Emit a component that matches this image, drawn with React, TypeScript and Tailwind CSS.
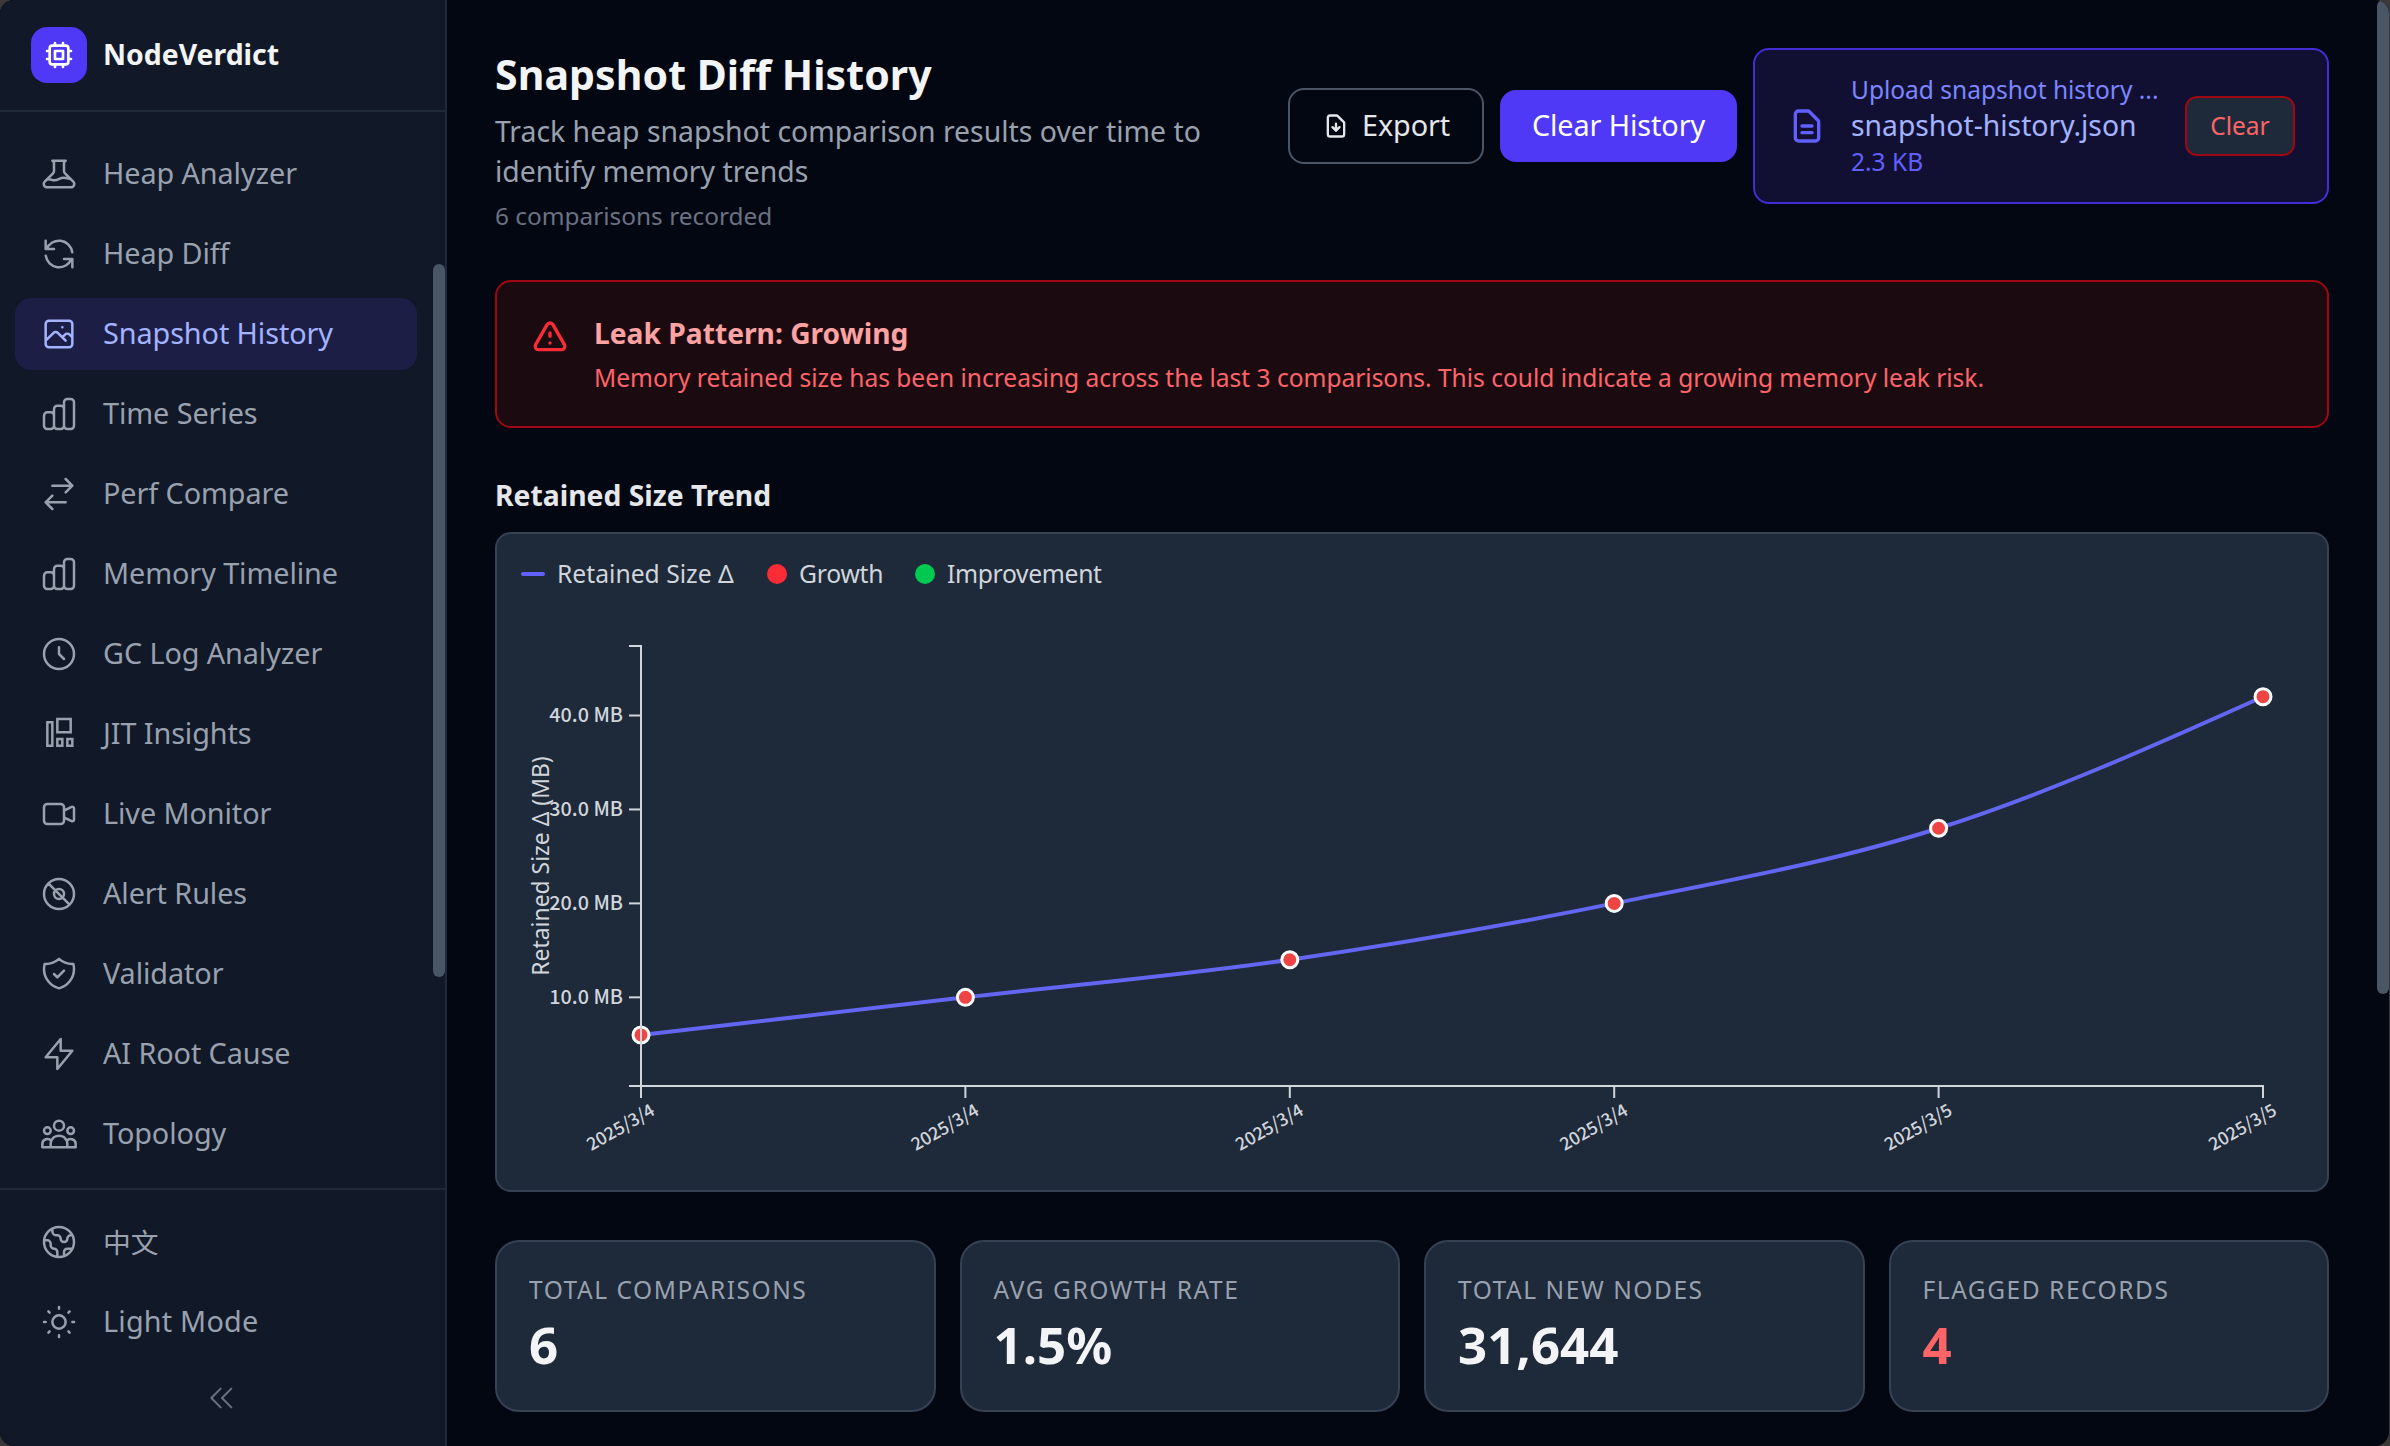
import clsx from "clsx"

interface IconProps {
    d: string
    className?: string
    strokeWidth?: number
}

const Icon = ({ d, className, strokeWidth = 1.5 }: IconProps) => (
    <svg
        viewBox="0 0 24 24"
        fill="none"
        stroke="currentColor"
        strokeWidth={strokeWidth}
        className={clsx("shrink-0", className)}
    >
        <path strokeLinecap="round" strokeLinejoin="round" d={d} />
    </svg>
)

const icons = {
    chip: "M9 3v2m6-2v2M9 19v2m6-2v2M5 9H3m2 6H3m18-6h-2m2 6h-2M7 19h10a2 2 0 002-2V7a2 2 0 00-2-2H7a2 2 0 00-2 2v10a2 2 0 002 2zM9 9h6v6H9V9z",
    beaker: "M19.428 15.428a2 2 0 00-1.022-.547l-2.387-.477a6 6 0 00-3.86.517l-.318.158a6 6 0 01-3.86.517L6.05 15.21a2 2 0 00-1.806.547M8 4h8l-1 1v5.172a2 2 0 00.586 1.414l5 5c1.26 1.26.367 3.414-1.415 3.414H4.828c-1.782 0-2.674-2.154-1.414-3.414l5-5A2 2 0 009 10.172V5L8 4z",
    refresh: "M4 4v5h.582m15.356 2A8.001 8.001 0 004.582 9m0 0H9m11 11v-5h-.581m0 0a8.003 8.003 0 01-15.357-2m15.357 2H15",
    photo: "M4 16l4.586-4.586a2 2 0 012.828 0L16 16m-2-2l1.586-1.586a2 2 0 012.828 0L20 14m-6-6h.01M6 20h12a2 2 0 002-2V6a2 2 0 00-2-2H6a2 2 0 00-2 2v12a2 2 0 002 2z",
    chart: "M9 19v-6a2 2 0 00-2-2H5a2 2 0 00-2 2v6a2 2 0 002 2h2a2 2 0 002-2zm0 0V9a2 2 0 012-2h2a2 2 0 012 2v10m-6 0a2 2 0 002 2h2a2 2 0 002-2m0 0V5a2 2 0 012-2h2a2 2 0 012 2v14a2 2 0 01-2 2h-2a2 2 0 01-2-2z",
    swap: "M8 7h12m0 0l-4-4m4 4l-4 4m0 6H4m0 0l4 4m-4-4l4-4",
    clock: "M12 8v4l3 3m6-3a9 9 0 11-18 0 9 9 0 0118 0z",
    video: "M15 10l4.553-2.276A1 1 0 0121 8.618v6.764a1 1 0 01-1.447.894L15 14M5 18h8a2 2 0 002-2V8a2 2 0 00-2-2H5a2 2 0 00-2 2v8a2 2 0 002 2z",
    alert: "M18.364 18.364A9 9 0 005.636 5.636m12.728 12.728A9 9 0 015.636 5.636m12.728 12.728L5.636 5.636M15 12a3 3 0 11-6 0 3 3 0 016 0z",
    shield: "M9 12l2 2 4-4m5.618-4.016A11.955 11.955 0 0112 2.944a11.955 11.955 0 01-8.618 3.04A12.02 12.02 0 003 9c0 5.591 3.824 10.29 9 11.622 5.176-1.332 9-6.03 9-11.622 0-1.042-.133-2.052-.382-3.016z",
    bolt: "M13 10V3L4 14h7v7l9-11h-7z",
    group: "M17 20h5v-2a3 3 0 00-5.356-1.857M17 20H7m10 0v-2c0-.656-.126-1.283-.356-1.857M7 20H2v-2a3 3 0 015.356-1.857M7 20v-2c0-.656.126-1.283.356-1.857m0 0a5.002 5.002 0 019.288 0M15 7a3 3 0 11-6 0 3 3 0 016 0zm6 3a2 2 0 11-4 0 2 2 0 014 0zM7 10a2 2 0 11-4 0 2 2 0 014 0z",
    globe: "M3.055 11H5a2 2 0 012 2v1a2 2 0 002 2 2 2 0 012 2v2.945M8 3.935V5.5A2.5 2.5 0 0010.5 8h.5a2 2 0 012 2 2 2 0 104 0 2 2 0 012-2h1.064M15 20.488V18a2 2 0 012-2h3.064M21 12a9 9 0 11-18 0 9 9 0 0118 0z",
    sun: "M12 3v1m0 16v1m9-9h-1M4 12H3m15.364 6.364l-.707-.707M6.343 6.343l-.707-.707m12.728 0l-.707.707M6.343 17.657l-.707.707M16 12a4 4 0 11-8 0 4 4 0 018 0z",
    collapse: "M11 19l-7-7 7-7m8 14l-7-7 7-7",
    download: "M12 10v6m0 0l-3-3m3 3l3-3m2 8H7a2 2 0 01-2-2V5a2 2 0 012-2h5.586a1 1 0 01.707.293l5.414 5.414a1 1 0 01.293.707V19a2 2 0 01-2 2z",
    document: "M9 12h6m-6 4h6m2 5H7a2 2 0 01-2-2V5a2 2 0 012-2h5.586a1 1 0 01.707.293l5.414 5.414a1 1 0 01.293.707V19a2 2 0 01-2 2z",
    warning: "M12 9v2m0 4h.01m-6.938 4h13.856c1.54 0 2.502-1.667 1.732-3L13.732 4c-.77-1.333-2.694-1.333-3.464 0L3.34 16c-.77 1.333.192 3 1.732 3z",
}

// plain blocks, drawn with square corners
const BlocksIcon = () => (
    <svg viewBox="0 0 24 24" fill="none" stroke="currentColor" strokeWidth={1.5} className="size-10 shrink-0">
        <path d="M5 5h3v14H5zM11 3h8v8h-8zM11 15h3v4h-3zM17 15h3v4h-3z" />
    </svg>
)

const navItems = [
    { label: "Heap Analyzer", icon: icons.beaker },
    { label: "Heap Diff", icon: icons.refresh },
    { label: "Snapshot History", icon: icons.photo, active: true },
    { label: "Time Series", icon: icons.chart },
    { label: "Perf Compare", icon: icons.swap },
    { label: "Memory Timeline", icon: icons.chart },
    { label: "GC Log Analyzer", icon: icons.clock },
    { label: "JIT Insights", icon: null },
    { label: "Live Monitor", icon: icons.video },
    { label: "Alert Rules", icon: icons.alert },
    { label: "Validator", icon: icons.shield },
    { label: "AI Root Cause", icon: icons.bolt },
    { label: "Topology", icon: icons.group },
]

const Sidebar = () => (
    <aside className="w-[447px] shrink-0 h-full flex flex-col bg-[#111827] border-r-2 border-gray-800">
        <div className="h-28 shrink-0 flex items-center gap-4 pl-[31px] border-b-2 border-gray-800">
            <div className="size-14 rounded-2xl bg-indigo-600 flex items-center justify-center text-white">
                <Icon d={icons.chip} strokeWidth={2} className="size-8" />
            </div>
            <span className="text-[28.4px] leading-10 font-bold text-gray-100 pb-0.5">NodeVerdict</span>
        </div>

        <div className="flex-1 min-h-0 flex justify-between">
            <nav className="w-[402px] ml-[15px] pt-[26px] flex flex-col gap-2">
                {navItems.map((item) => (
                    <a
                        key={item.label}
                        className={clsx(
                            "h-18 shrink-0 flex items-center gap-6 px-6 rounded-2xl text-[28.8px] leading-10 tracking-[-0.003em]",
                            item.active ? "bg-[#1c1e45] text-indigo-300" : "text-gray-400"
                        )}
                    >
                        {item.icon ? <Icon d={item.icon} className="size-10" /> : <BlocksIcon />}
                        <span className="pb-0.5">{item.label}</span>
                    </a>
                ))}
            </nav>
            <div className="w-3 h-[713px] mt-[152px] rounded-full bg-gray-600" />
        </div>

        <div className="h-[258px] shrink-0 border-t-2 border-gray-800 pt-4 pl-[15px] flex flex-col gap-2 text-gray-400 text-[28.8px] leading-10">
            <button className="h-18 flex items-center gap-6 px-6">
                <Icon d={icons.globe} className="size-10" />
                <span className="text-[27.8px]">中文</span>
            </button>
            <button className="h-18 flex items-center gap-6 px-6">
                <Icon d={icons.sun} className="size-10" />
                <span className="pb-0.5 tracking-[0.007em]">Light Mode</span>
            </button>
            <button className="h-16 w-[414px] flex items-center justify-center text-gray-500">
                <Icon d={icons.collapse} className="size-8" />
            </button>
        </div>
    </aside>
)

const PageHeader = () => (
    <header className="flex items-start justify-between h-46">
        <div className="flex-1">
            <h1 className="h-14 text-[41px] leading-[53px] font-bold text-gray-100 tracking-[0.002em]">Snapshot Diff History</h1>
            <p className="mt-[7px] text-[28.4px] leading-10 text-gray-400">
                Track heap snapshot comparison results over time to<br />identify memory trends
            </p>
            <p className="mt-[9px] text-[24.4px] leading-8 text-gray-500">6 comparisons recorded</p>
        </div>

        <div className="flex items-center gap-4 text-[28.8px] leading-10">
            <button className="w-49 h-19 flex items-center gap-3 pl-8 rounded-2xl border-2 border-gray-600 text-gray-200">
                <Icon d={icons.download} strokeWidth={2} className="size-7" />
                <span className="pb-0.5 tracking-[-0.003em]">Export</span>
            </button>
            <button className="w-[237px] h-18 pb-0.5 rounded-2xl bg-indigo-600 text-white tracking-[-0.003em]">Clear History</button>
            <div className="w-[576px] h-39 flex items-center px-8 rounded-2xl border-2 border-indigo-700 bg-[#111032]">
                <Icon d={icons.document} strokeWidth={2} className="size-10 text-indigo-500" />
                <div className="flex-1 min-w-0 mx-6">
                    <p className="text-[24.5px] leading-8 text-indigo-400">Upload snapshot history ...</p>
                    <p className="h-10 text-[28.3px] leading-[38px] text-indigo-300">snapshot-history.json</p>
                    <p className="text-[24.5px] leading-8 text-indigo-500">2.3 KB</p>
                </div>
                <button className="w-[110px] h-15 shrink-0 rounded-xl border-2 border-red-800 bg-gray-800 text-[24.5px] leading-8 text-red-400">
                    Clear
                </button>
            </div>
        </div>
    </header>
)

const LeakAlert = () => (
    <section className="mt-12 h-37 flex items-start gap-6 py-8 px-[33px] rounded-2xl border-2 border-red-800 bg-[#1c0a11]">
        <Icon d={icons.warning} strokeWidth={2} className="size-10 mt-1 text-red-500" />
        <div>
            <h3 className="h-10 text-[28.2px] leading-[38px] font-bold text-red-300">Leak Pattern: Growing</h3>
            <p className="mt-2 text-[24.5px] leading-8 text-red-400">
                Memory retained size has been increasing across the last 3 comparisons. This could indicate a growing memory leak risk.
            </p>
        </div>
    </section>
)

const records = [
    { date: "2025/3/4", mb: 6 },
    { date: "2025/3/4", mb: 10 },
    { date: "2025/3/4", mb: 14 },
    { date: "2025/3/4", mb: 20 },
    { date: "2025/3/5", mb: 28 },
    { date: "2025/3/5", mb: 42 },
]

const margin = { top: 40, right: 40, bottom: 80, left: 120 }
const chart = { width: 1782, height: 560 }
const bottom = chart.height - margin.bottom
const right = chart.width - margin.right

const x = (i: number) => margin.left + (i * (right - margin.left)) / (records.length - 1)
const y = (mb: number) => 485.3 - mb * 9.395

// cubic segments with monotone tangents
const linePath = (points: [number, number][]) => {
    const slopes = points.slice(1).map((p, i) => (p[1] - points[i][1]) / (p[0] - points[i][0]))
    const tangents = points.map((_, i) => {
        if (i === 0 || i === points.length - 1) return 0
        const a = slopes[i - 1]
        const b = slopes[i]
        return a * b <= 0 ? 0 : Math.sign(a) * Math.min(Math.abs(a), Math.abs(b), Math.abs(a + b) / 4) * 2
    })
    tangents[0] = (3 * slopes[0] - tangents[1]) / 2
    const last = points.length - 1
    tangents[last] = (3 * slopes[last - 1] - tangents[last - 1]) / 2

    return points.reduce((d, [px, py], i) => {
        if (i === 0) return `M${px},${py}`
        const [qx, qy] = points[i - 1]
        const dx = (px - qx) / 3
        return `${d}C${qx + dx},${qy + dx * tangents[i - 1]},${px - dx},${py - dx * tangents[i]},${px},${py}`
    }, "")
}

const TrendChart = () => (
    <svg width={chart.width} height={chart.height} className="block mt-4">
        <path
            d={linePath(records.map((r, i) => [x(i), y(r.mb)]))}
            fill="none"
            stroke="#6366f1"
            strokeWidth={4}
        />
        {records.map((r, i) => (
            <circle key={i} cx={x(i)} cy={y(r.mb)} r={8} fill="#ef4444" stroke="#fff" strokeWidth={3} />
        ))}

        <g fill="none" stroke="#d1d5dc" strokeWidth={2}>
            <path d={`M${margin.left},${bottom + 12}V${bottom}H${right}V${bottom + 12}`} />
            <path d={`M${margin.left - 12},${margin.top}H${margin.left}V${bottom}H${margin.left - 12}`} />
            {records.slice(1, -1).map((_, i) => (
                <path key={i} d={`M${x(i + 1)},${bottom}v12`} />
            ))}
            {[10, 20, 30, 40].map((v) => (
                <path key={v} d={`M${margin.left - 12},${y(v)}h12`} />
            ))}
        </g>

        <g fill="#d1d5dc" textAnchor="end" className="font-['Noto_Sans_CJK_SC','Noto_Sans',sans-serif] font-medium">
            {[10, 20, 30, 40].map((v) => (
                <text key={v} x={margin.left - 18} y={y(v) + 6.5} className="text-[19.8px]">{v}.0 MB</text>
            ))}
            {records.map((r, i) => (
                <text
                    key={i}
                    className="text-[17.8px]"
                    transform={`translate(${x(i) + 15},${bottom + 28}) rotate(-30)`}
                >
                    {r.date}
                </text>
            ))}
        </g>
        <text
            fill="#d1d5dc"
            textAnchor="middle"
            className="text-[22.9px]"
            transform={`translate(28,${(margin.top + bottom) / 2}) rotate(-90)`}
        >
            Retained Size Δ (MB)
        </text>
    </svg>
)

const stats = [
    { label: "Total Comparisons", value: "6" },
    { label: "Avg Growth Rate", value: "1.5%" },
    { label: "Total New Nodes", value: "31,644" },
    { label: "Flagged Records", value: "4", flagged: true },
]

export default function App() {
    return (
        <div className="w-[2390px] h-[1446px] pr-px bg-[#3a3938] font-['Noto_Sans','Noto_Sans_CJK_SC',sans-serif]">
            <div className="h-full flex rounded-[14px] overflow-hidden bg-gray-950">
                <Sidebar />
                <main className="flex-1 min-w-0 p-12">
                    <PageHeader />
                    <LeakAlert />

                    <h2 className="mt-12 h-10 text-[28.3px] leading-[38px] font-bold text-gray-200">Retained Size Trend</h2>
                    <section className="mt-4 h-[660px] p-6 rounded-2xl border-2 border-gray-700 bg-gray-800">
                        <div className="flex items-center gap-8 text-[24.7px] leading-8 text-gray-300">
                            <div className="flex items-center gap-3">
                                <span className="w-6 h-1 rounded-xs bg-indigo-500" />
                                <span className="w-[178px] whitespace-nowrap">Retained Size Δ</span>
                            </div>
                            <div className="flex items-center gap-3">
                                <span className="size-5 rounded-full bg-red-500" />
                                <span className="w-[84px] tracking-[-0.01em]">Growth</span>
                            </div>
                            <div className="flex items-center gap-3">
                                <span className="size-5 rounded-full bg-green-500" />
                                <span className="tracking-[-0.014em]">Improvement</span>
                            </div>
                        </div>
                        <TrendChart />
                    </section>

                    <div className="mt-12 grid grid-cols-4 gap-6">
                        {stats.map((stat) => (
                            <div key={stat.label} className="h-43 p-8 rounded-3xl border-2 border-gray-700 bg-gray-800">
                                <p className="text-[24.5px] leading-8 uppercase tracking-[0.063em] text-gray-400">{stat.label}</p>
                                <p className={clsx("mt-2 text-[51px] leading-[60px] font-bold", stat.flagged ? "text-red-400" : "text-gray-100")}>
                                    {stat.value}
                                </p>
                            </div>
                        ))}
                    </div>
                </main>
                <div className="w-3 h-[994px] rounded-full bg-gray-600" />
            </div>
        </div>
    )
}
